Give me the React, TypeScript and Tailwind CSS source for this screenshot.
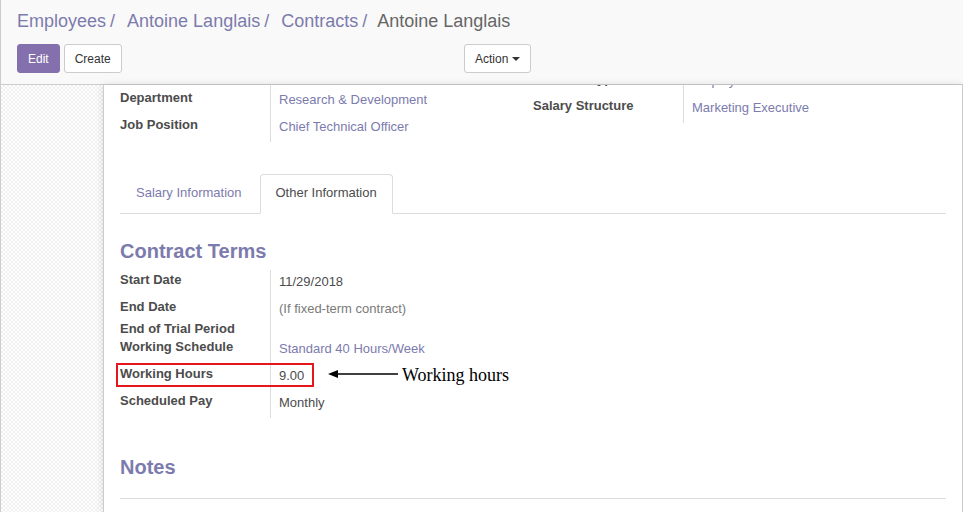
import React from 'react';

const linkColor = 'text-[#7c7bad]';

interface FieldRow {
  label: string;
  value?: string;
  kind?: 'link' | 'text' | 'muted';
  height: string;
  highlight?: boolean;
}

// 상단 그룹 (스크롤 되어 일부 가려짐)
const leftGroup: FieldRow[] = [
  { label: 'Employee', value: 'Antoine Langlais', kind: 'link', height: 'h-[27px]' },
  { label: 'Department', value: 'Research & Development', kind: 'link', height: 'h-[27px]' },
  { label: 'Job Position', value: 'Chief Technical Officer', kind: 'link', height: 'h-[27px]' },
];

const rightGroup: FieldRow[] = [
  { label: 'Contract Type', value: 'Employee', kind: 'link', height: 'h-[27px]' },
  { label: 'Salary Structure', value: 'Marketing Executive', kind: 'link', height: 'h-[27px]' },
];

const contractTerms: FieldRow[] = [
  { label: 'Start Date', value: '11/29/2018', height: 'h-[27px]' },
  { label: 'End Date', value: '(If fixed-term contract)', kind: 'muted', height: 'h-[22px]' },
  { label: 'End of Trial Period', height: 'h-[18px]' },
  { label: 'Working Schedule', value: 'Standard 40 Hours/Week', kind: 'link', height: 'h-[27px]' },
  { label: 'Working Hours', value: '9.00', height: 'h-[27px]', highlight: true },
  { label: 'Scheduled Pay', value: 'Monthly', height: 'h-[27px]' },
];

function Row({ row }: { row: FieldRow }) {
  const valueColor =
    row.kind === 'link' ? linkColor : row.kind === 'muted' ? 'text-[#7a7a7a]' : 'text-[#4c4c4c]';

  return (
    <div className={`relative flex ${row.height}`}>
      <div className="w-[150px] shrink-0 pt-[1px] font-bold leading-[18px] text-[#4c4c4c]">{row.label}</div>
      <div className={`flex-1 border-l border-[#dcdcdc] pl-[8px] pt-[3px] leading-[18px] ${valueColor}`}>
        {row.value}
      </div>

      {/* 강조 표시 주석 */}
      {row.highlight && (
        <>
          <div className="absolute -left-[4px] -top-[1px] h-[24px] w-[198px] border-2 border-[#e5161d]" />
          <svg
            className="absolute left-[207px] top-[4px]"
            width="72"
            height="12"
            viewBox="0 0 72 12"
          >
            <line x1="8" y1="6" x2="71" y2="6" stroke="#000" strokeWidth="1.5" />
            <polygon points="1,6 11,2 11,10" fill="#000" />
          </svg>
          <div className="absolute left-[282px] -top-[1px] whitespace-nowrap font-['Liberation_Serif',serif] text-[18px] leading-[24px] text-black">
            Working hours
          </div>
        </>
      )}
    </div>
  );
}

function Breadcrumb() {
  const items = ['Employees', 'Antoine Langlais', 'Contracts'];
  return (
    <div className="flex h-[24px] items-center text-[18px] leading-[24px]">
      {items.map((item) => (
        <React.Fragment key={item}>
          <span className={linkColor}>{item}</span>
          <span className={`ml-[4px] mr-[12px] ${linkColor}`}>/</span>
        </React.Fragment>
      ))}
      <span className="-ml-[2px] text-[#666]">Antoine Langlais</span>
    </div>
  );
}

export default function App() {
  return (
    <div className="flex h-[512px] w-[963px] flex-col overflow-hidden border-l border-[#cccccc] bg-white font-['Liberation_Sans',Arial,sans-serif] text-[13px] text-[#4c4c4c]">
      {/* 컨트롤 패널 */}
      <div className="h-[85px] shrink-0 border-b border-[#cccccc] bg-[#f9f9f9] px-[16px] pt-[9px]">
        <Breadcrumb />
        <div className="mt-[11px] flex">
          <div className="flex w-[447px] gap-[4px]">
            <button className="h-[29px] rounded-[3px] border border-[#8470ac] bg-[#8470ac] px-[10px] text-[12px] text-white">
              Edit
            </button>
            <button className="h-[29px] rounded-[3px] border border-[#cccccc] bg-white px-[10px] text-[12px] text-[#333]">
              Create
            </button>
          </div>
          <button className="flex h-[29px] items-center rounded-[3px] border border-[#cccccc] bg-white px-[10px] text-[12px] text-[#333]">
            Action
            <span className="ml-[4px] inline-block border-x-[4px] border-t-[4px] border-x-transparent border-t-[#333]" />
          </button>
        </div>
      </div>

      <div className="flex min-h-0 flex-1">
        {/* 배경 패턴 */}
        <div className="w-[102px] shrink-0 bg-[image:repeating-conic-gradient(#f1f1f1_0_25%,#fdfdfd_0_50%)] bg-[length:4px_4px]" />

        {/* 시트 */}
        <div className="min-w-0 flex-1 overflow-hidden border-x border-[#cccccc] bg-white px-[16px] shadow-[0_0_8px_rgba(0,0,0,0.12)]">
          <div className="-mt-[24px] flex items-start">
            <div className="w-[413px]">
              {leftGroup.map((row) => (
                <Row key={row.label} row={row} />
              ))}
            </div>
            <div className="mt-[8px] w-[413px]">
              {rightGroup.map((row) => (
                <Row key={row.label} row={row} />
              ))}
            </div>
          </div>

          {/* 탭 */}
          <div className="mt-[32px] flex border-b border-[#dcdcdc]">
            <div className={`-mb-px mr-[2px] rounded-t-[4px] border border-transparent px-[15px] pb-[11px] pt-[9px] leading-[18px] ${linkColor}`}>
              Salary Information
            </div>
            <div className="-mb-px rounded-t-[4px] border border-[#dcdcdc] border-b-white bg-white px-[15px] pb-[11px] pt-[9px] leading-[18px] text-[#4c4c4c]">
              Other Information
            </div>
          </div>

          <h2 className={`mt-[23px] text-[20px] font-bold leading-[28px] ${linkColor}`}>Contract Terms</h2>
          <div className="mt-[5px]">
            {contractTerms.map((row) => (
              <Row key={row.label} row={row} />
            ))}
          </div>

          <h2 className={`mt-[35px] text-[20px] font-bold leading-[28px] ${linkColor}`}>Notes</h2>
          <div className="mt-[17px] border-t border-[#dcdcdc]" />
        </div>
      </div>
    </div>
  );
}
